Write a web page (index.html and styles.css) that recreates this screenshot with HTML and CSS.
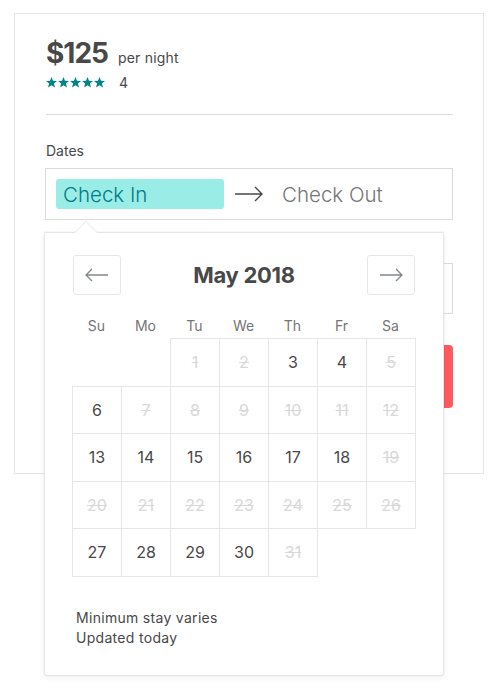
FILE: index.html
```html
<!DOCTYPE html>
<html lang="en">
<head>
  <meta charset="UTF-8" />
  <meta name="viewport" content="width=device-width, initial-scale=1.0" />
  <title>Book</title>
  <link rel="stylesheet" href="styles.css">
</head>
<body>
  <div class="card">
    <div class="price">
      <span class="amount">$125</span>
      <span class="per">per night</span>
    </div>
    <div class="rating">
      <svg class="stars" width="60" height="11" viewBox="0 0 60 11">
        <defs>
          <path id="star" d="M5.5 0 L7 3.8 L11 4 L7.9 6.6 L9 10.6 L5.5 8.3 L2 10.6 L3.1 6.6 L0 4 L4 3.8 Z" />
        </defs>
        <use href="#star" x="0" fill="#008489" />
        <use href="#star" x="12" fill="#008489" />
        <use href="#star" x="24" fill="#008489" />
        <use href="#star" x="36" fill="#008489" />
        <use href="#star" x="48" fill="#008489" />
      </svg>
      <span class="count">4</span>
    </div>
    <hr class="divider" />

    <label class="label">Dates</label>
    <div class="dates">
      <div class="date-field active">Check In</div>
      <svg class="dates-arrow" width="30" height="16" viewBox="0 0 30 16">
        <path d="M1 8 H28 M21 1 L28 8 L21 15" fill="none" stroke="#484848" stroke-width="1.4" />
      </svg>
      <div class="date-field out">Check Out</div>

      <div class="picker">
        <div class="caret"></div>
        <div class="nav">
          <button class="nav-btn" type="button">
            <svg width="24" height="14" viewBox="0 0 24 14"><path d="M1 7 H23 M7 1 L1 7 L7 13" fill="none" stroke="#82888a" stroke-width="1.3" /></svg>
          </button>
          <div class="month">May 2018</div>
          <button class="nav-btn" type="button">
            <svg width="24" height="14" viewBox="0 0 24 14"><path d="M1 7 H23 M17 1 L23 7 L17 13" fill="none" stroke="#82888a" stroke-width="1.3" /></svg>
          </button>
        </div>
        <div class="weekdays">
          <span>Su</span><span>Mo</span><span>Tu</span><span>We</span><span>Th</span><span>Fr</span><span>Sa</span>
        </div>
        <table class="days">
          <tr>
            <td class="empty"></td><td class="empty"></td>
            <td class="blocked">1</td><td class="blocked">2</td><td>3</td><td>4</td><td class="blocked">5</td>
          </tr>
          <tr>
            <td>6</td><td class="blocked">7</td><td class="blocked">8</td><td class="blocked">9</td><td class="blocked">10</td><td class="blocked">11</td><td class="blocked">12</td>
          </tr>
          <tr>
            <td>13</td><td>14</td><td>15</td><td>16</td><td>17</td><td>18</td><td class="blocked">19</td>
          </tr>
          <tr>
            <td class="blocked">20</td><td class="blocked">21</td><td class="blocked">22</td><td class="blocked">23</td><td class="blocked">24</td><td class="blocked">25</td><td class="blocked">26</td>
          </tr>
          <tr>
            <td>27</td><td>28</td><td>29</td><td>30</td><td class="blocked">31</td><td class="empty"></td><td class="empty"></td>
          </tr>
        </table>
        <div class="notes">
          <div>Minimum stay varies</div>
          <div>Updated today</div>
        </div>
      </div>
    </div>

    <div class="guests"></div>
    <button class="book" type="button" aria-label="Request to Book"></button>
  </div>
</body>
</html>
```

FILE: styles.css
```css
html, body {
  min-height: 700px;
}
body {
  margin: 0;
  font-family: 'Inter', 'Helvetica Neue', sans-serif;
  color: #484848;
  background: #fff;
}
.card {
  width: 470px;
  box-sizing: border-box;
  margin: 13px 0 0 14px;
  padding: 22px 30px 65px 31px;
  border: 1px solid #e4e4e4;
}
.price {
  display: flex;
  align-items: baseline;
}
.amount {
  font-size: 28px;
  font-weight: 700;
  letter-spacing: -1px;
  line-height: 34px;
}
.per {
  font-size: 14px;
  margin-left: 10px;
  letter-spacing: 0.2px;
}
.rating {
  display: flex;
  align-items: center;
  height: 20px;
  margin-top: 2px;
}
.count {
  font-size: 14px;
  margin-left: 13px;
}
.divider {
  border: none;
  border-top: 1px solid #dbdbdb;
  margin: 22px 0 0;
}
.label {
  display: block;
  font-size: 14px;
  margin-top: 27px;
  line-height: 18px;
}
.dates {
  position: relative;
  display: flex;
  align-items: center;
  height: 52px;
  box-sizing: border-box;
  margin: 8px 0 0 -1px;
  padding: 0 10px;
  border: 1px solid #dbdbdb;
}
.date-field {
  flex-shrink: 0;
  width: 168px;
  box-sizing: border-box;
  height: 30px;
  line-height: 32px;
  padding-left: 7px;
  font-size: 20.5px;
  font-weight: 300;
  color: #757575;
  border-radius: 3px;
}
.date-field.active {
  background: #99ede6;
  color: #007a87;
}
.date-field.out {
  width: auto;
  padding-left: 0;
}
.dates-arrow {
  flex-shrink: 0;
  margin: 0 18px 0 10px;
}
.picker {
  position: absolute;
  top: 63px;
  left: -2px;
  width: 400px;
  height: 444px;
  box-sizing: border-box;
  padding: 22px 28px 0 27px;
  background: #fff;
  border: 1px solid #e4e7e7;
  border-radius: 0 0 3px 3px;
  box-shadow: 0 2px 6px rgba(0, 0, 0, 0.05), 0 0 0 1px rgba(0, 0, 0, 0.02);
  z-index: 2;
}
.caret {
  position: absolute;
  top: -12px;
  left: 29px;
  width: 0;
  height: 0;
  border-left: 12px solid transparent;
  border-right: 12px solid transparent;
  border-bottom: 12px solid #e4e7e7;
}
.caret::after {
  content: "";
  position: absolute;
  top: 1px;
  left: -11px;
  border-left: 11px solid transparent;
  border-right: 11px solid transparent;
  border-bottom: 11px solid #fff;
}
.nav {
  display: flex;
  align-items: center;
  justify-content: space-between;
  padding-left: 1px;
}
.nav-btn {
  width: 48px;
  height: 40px;
  display: flex;
  align-items: center;
  justify-content: center;
  background: #fff;
  border: 1px solid #e4e7e7;
  border-radius: 3px;
  padding: 0;
}
.month {
  font-size: 22px;
  font-weight: 700;
  letter-spacing: -0.3px;
}
.weekdays {
  display: grid;
  grid-template-columns: repeat(7, 49px);
  margin-top: 21px;
  font-size: 14px;
  line-height: 20px;
  color: #757575;
  text-align: center;
}
.days {
  border-collapse: collapse;
  margin-top: 2px;
  width: 344px;
}
.days td {
  width: 48px;
  height: 46.5px;
  padding: 0;
  border: 1px solid #e4e7e7;
  text-align: center;
  font-size: 16px;
  color: #484848;
}
.days td.blocked {
  color: #d8d8d8;
  text-decoration: line-through;
}
.days td.empty {
  border: none;
}
.notes {
  margin-top: 31px;
  padding-left: 4px;
  font-size: 14px;
  line-height: 20px;
  letter-spacing: 0.3px;
}
.guests {
  height: 51px;
  box-sizing: border-box;
  margin-top: 43px;
  border: 1px solid #dbdbdb;
}
.book {
  display: block;
  width: 100%;
  height: 63px;
  margin-top: 31px;
  border: none;
  border-radius: 4px;
  background: #ff5a5f;
}
```
